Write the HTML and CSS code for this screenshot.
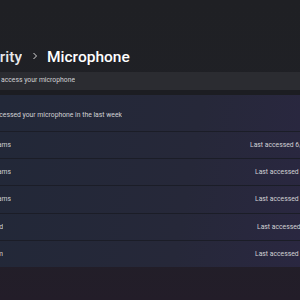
FILE: index.html
```html
<!DOCTYPE html>
<html lang="en">
<head>
  <meta charset="UTF-8" />
  <title>Settings - Microphone</title>
  <link rel="stylesheet" href="styles.css">
</head>
<body>
  <div class="window">
    <header class="crumbs">
      <div class="clip crumb-prev"><span>Privacy &amp; security</span></div>
      <svg class="chev" width="6" height="8" viewBox="0 0 6 8"><path d="M1.5 1 L4.5 4 L1.5 7" fill="none" stroke="#d8d8d8" stroke-width="1"/></svg>
      <h1>Microphone</h1>
    </header>

    <section class="panel access">
      <div class="clip access-label"><span>Let apps access your microphone</span></div>
    </section>

    <section class="panel history">
      <div class="history-head">
        <div class="clip head-label"><span>Recently accessed your microphone in the last week</span></div>
      </div>
      <div class="row">
        <div class="clip name"><span>Microsoft Teams</span></div>
        <div class="when first">Last accessed 6/24/2024 10:41 AM</div>
      </div>
      <div class="row">
        <div class="clip name"><span>Microsoft Teams</span></div>
        <div class="when">Last accessed 6/9/2024 1:02 PM</div>
      </div>
      <div class="row">
        <div class="clip name"><span>Microsoft Teams</span></div>
        <div class="when">Last accessed 6/9/2024 1:02 PM</div>
      </div>
      <div class="row">
        <div class="clip name short"><span>Discord</span></div>
        <div class="when later">Last accessed 6/8/2024 9:15 PM</div>
      </div>
      <div class="row">
        <div class="clip name short"><span>Zoom</span></div>
        <div class="when">Last accessed 6/21/2024 8:30 PM</div>
      </div>
    </section>
  </div>
</body>
</html>
```

FILE: styles.css
```css
html, body {
  margin: 0;
  height: 100%;
  overflow: hidden;
}
body {
  font-family: Roboto, "Noto Sans", sans-serif;
  color: #d2d2d5;
  background: linear-gradient(180deg, #1f2024 0%, #202127 60%, #231d29 100%);
}
.window {
  width: 420px;
}
.clip {
  display: flex;
  justify-content: flex-end;
  overflow: hidden;
  white-space: nowrap;
}
.clip span {
  flex-shrink: 0;
}

.crumbs {
  height: 72px;
  display: flex;
  align-items: flex-end;
  padding-bottom: 3px;
  box-sizing: border-box;
  color: #fff;
  font-size: 15.5px;
  font-weight: 500;
  line-height: 24px;
}
.crumb-prev {
  width: 22px;
  color: #e8e8ea;
}
.chev {
  margin: 0 9px 9px 10px;
}
.crumbs h1 {
  margin: 0;
  font-size: 15.5px;
  font-weight: 500;
}

.panel {
  font-size: 6.8px;
}
.access {
  height: 18px;
  display: flex;
  align-items: center;
  background: #2b2c31;
  border-bottom: 5px solid #1c1d22;
}
.access-label {
  width: 75px;
  padding-bottom: 2px;
}

.history {
  background: linear-gradient(100deg, #222838 0%, #262839 45%, #2a2741 75%, #29283a 100%);
}
.history-head {
  height: 37px;
  display: flex;
  align-items: center;
  padding-top: 4px;
  box-sizing: border-box;
  border-bottom: 1px solid #1b1d27;
}
.head-label {
  width: 122px;
}
.row {
  height: 26.2px;
  display: flex;
  align-items: center;
  border-bottom: 1px solid #1b1d27;
}
.row:last-child {
  border-bottom: none;
}
.name {
  width: 11px;
}
.name.short {
  width: 3px;
}
.when {
  margin-left: auto;
  width: 165px;
}
.when.first {
  width: 170px;
}
.when.later {
  width: 163px;
}
```
